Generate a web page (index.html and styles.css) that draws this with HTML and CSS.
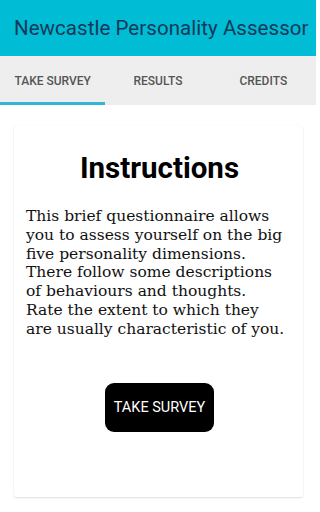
FILE: index.html
```html
<!DOCTYPE html>
<html>
<head>
<meta charset="utf-8">
<link rel="stylesheet" href="styles.css">
</head>
<body>
<header class="appbar">Newcastle Personality Assessor</header>
<nav class="tabs">
  <div class="tab active">TAKE SURVEY</div>
  <div class="tab">RESULTS</div>
  <div class="tab">CREDITS</div>
</nav>
<main class="content">
  <section class="card">
    <h1 class="heading">Instructions</h1>
    <p class="text">This brief questionnaire allows<br>you to assess yourself on the big<br>five personality dimensions.<br>There follow some descriptions<br>of behaviours and thoughts.<br>Rate the extent to which they<br>are usually characteristic of you.</p>
    <div class="actions"><button class="btn">TAKE SURVEY</button></div>
  </section>
</main>
</body>
</html>
```
FILE: styles.css
```css
html, body { margin: 0; padding: 0; background: #ffffff; }
body { width: 316px; height: 512px; overflow: hidden; font-family: Roboto, "Liberation Sans", sans-serif; }
.appbar {
  height: 56px; background: #00bcd4; color: #14395a;
  font-size: 20.5px; letter-spacing: 0.05px; line-height: 56px; padding-left: 14px; white-space: nowrap;
}
.tabs { display: flex; height: 49px; background: #eeeeee; }
.tab {
  flex: 1; display: flex; align-items: center; justify-content: center;
  font-size: 12px; font-weight: 500; color: #555555; box-sizing: border-box;
  border-bottom: 3px solid transparent; padding-top: 4px;
}
.tab.active { border-bottom-color: #33b5d8; }
.content { padding: 21px 13px 0 14px; }
.card {
  height: 371px; background: #fff; border-radius: 2px;
  box-shadow: 0 1px 2px rgba(0,0,0,0.12), 0 0 1px rgba(0,0,0,0.08);
  padding: 0 10px 0 12px; box-sizing: border-box;
}
.heading {
  margin: 0; padding-top: 25px; text-align: center;
  font-size: 29.5px; font-weight: 700; color: #000; line-height: 34px;
}
.text {
  margin: 22px 0 0 0; font-family: "DejaVu Serif", serif; font-size: 15.5px;
  line-height: 18.8px; color: #111; white-space: nowrap;
}
.actions { display: flex; justify-content: center; margin-top: 44px; }
.btn {
  width: 109px; height: 49px; background: #000; color: #fff; border: none;
  border-radius: 9px; font-family: Roboto, sans-serif; font-size: 14.5px; padding: 0;
}
```
